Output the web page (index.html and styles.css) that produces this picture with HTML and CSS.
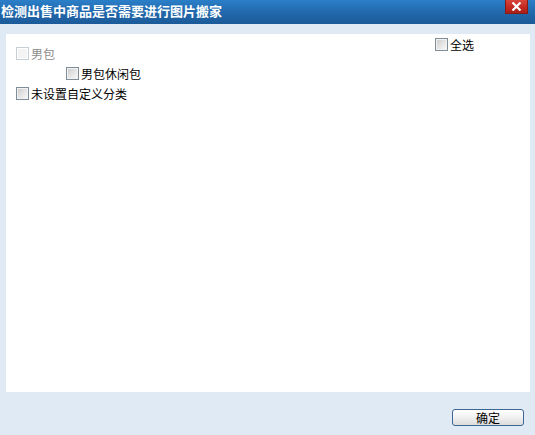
FILE: index.html
```html
<!DOCTYPE html>
<html lang="zh-CN">
<head>
<meta charset="utf-8">
<title>检测出售中商品是否需要进行图片搬家</title>
<link rel="stylesheet" href="styles.css">
</head>
<body>
<div class="dialog">
  <div class="titlebar">
    <span class="title">检测出售中商品是否需要进行图片搬家</span>
    <span class="close" aria-label="关闭">
      <svg width="11" height="9" viewBox="0 0 11 9"><path d="M1.5 0.5 L9.5 8.5 M9.5 0.5 L1.5 8.5" stroke="#fff" stroke-width="2.2" fill="none"/></svg>
    </span>
  </div>
  <div class="panel">
    <div class="tree">
      <label class="row disabled"><span class="box"></span><span class="text">男包</span></label>
      <label class="row child"><span class="box"></span><span class="text">男包休闲包</span></label>
      <label class="row"><span class="box"></span><span class="text">未设置自定义分类</span></label>
    </div>
    <label class="row selectall"><span class="box"></span><span class="text">全选</span></label>
  </div>
  <div class="footer">
    <button class="btn">确定</button>
  </div>
</div>
</body>
</html>
```
FILE: styles.css
```css
html, body {
  margin: 0;
  padding: 0;
}
body {
  background: #dfeaf5;
  font-family: "Noto Sans CJK SC", "Noto Sans", sans-serif;
  font-size: 12px;
  color: #000;
  width: 535px;
  height: 435px;
  overflow: hidden;
}
.dialog {
  display: flex;
  flex-direction: column;
}
.titlebar {
  height: 24px;
  background: linear-gradient(to bottom, #2b7fc8 0%, #2269ad 50%, #1b5a98 100%);
  display: flex;
  align-items: flex-start;
  justify-content: space-between;
}
.title {
  color: #fff;
  font-weight: bold;
  font-size: 13px;
  line-height: 22px;
  padding-left: 1px;
}
.close {
  width: 23px;
  height: 14px;
  margin-right: 7px;
  background: linear-gradient(to bottom, #d8443a 0%, #c0281f 60%, #a8201a 100%);
  border: 1px solid #8a1a14;
  border-top: none;
  box-sizing: border-box;
  display: flex;
  align-items: center;
  justify-content: center;
}
.close svg { display: block; }
.panel {
  margin: 10px 5px 0 6px;
  height: 358px;
  background: #fff;
  display: flex;
  justify-content: space-between;
  align-items: flex-start;
}
.tree {
  padding: 13px 0 0 10px;
  display: flex;
  flex-direction: column;
}
.row {
  display: flex;
  align-items: flex-start;
  height: 20px;
}
.row .box {
  width: 13px;
  height: 13px;
  box-sizing: border-box;
  border: 1px solid #7f8d99;
  background: linear-gradient(135deg, #c9c9c9 0%, #e4e4e4 50%, #fafafa 100%);
  box-shadow: inset 0 0 0 1px #f2f2f2;
  margin-right: 2px;
}
.row .text {
  line-height: 13px;
  height: 13px;
}
.row.disabled .box {
  border-color: #c7cfd6;
  background: #f4f4f4;
  box-shadow: inset 0 0 0 1px #fff;
}
.row.disabled .text {
  color: #8c8c8c;
}
.row.child {
  padding-left: 50px;
}
.selectall {
  margin: 4px 56px 0 0;
}
.footer {
  display: flex;
  justify-content: flex-end;
  padding: 17px 11px 0 0;
}
.btn {
  width: 72px;
  height: 17px;
  box-sizing: border-box;
  border: 1px solid #3d6792;
  border-radius: 3px;
  background: linear-gradient(to bottom, #ffffff 0%, #f2f2f2 45%, #dcdcdc 100%);
  font-family: "Noto Sans CJK SC", "Noto Sans", sans-serif;
  font-size: 12px;
  line-height: 15px;
  padding: 0;
  color: #000;
}
```
